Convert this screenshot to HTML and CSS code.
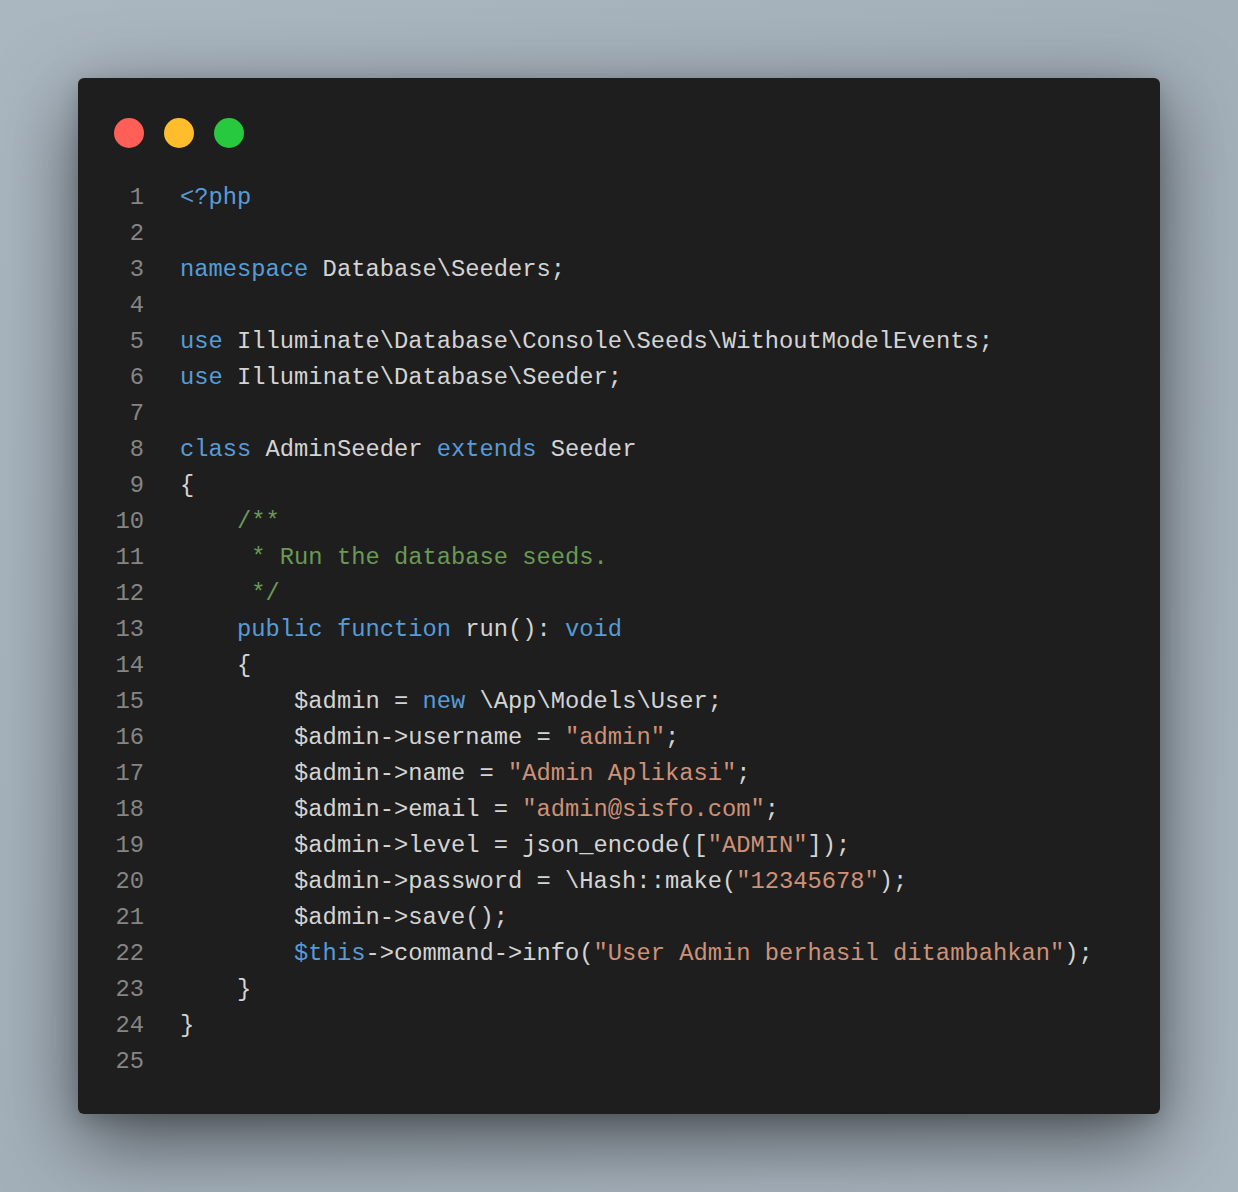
FILE: index.html
```html
<!DOCTYPE html>
<html>
<head>
<meta charset="utf-8">
<link rel="stylesheet" href="styles.css">
</head>
<body>
<div class="page">
  <div class="window">
    <div class="dots">
      <span class="dot red"></span>
      <span class="dot yellow"></span>
      <span class="dot green"></span>
    </div>
    <div class="code">
      <div class="line"><span class="num">1</span><span class="src"><span class="k">&lt;?php</span></span></div>
      <div class="line"><span class="num">2</span><span class="src"></span></div>
      <div class="line"><span class="num">3</span><span class="src"><span class="k">namespace</span> Database\Seeders;</span></div>
      <div class="line"><span class="num">4</span><span class="src"></span></div>
      <div class="line"><span class="num">5</span><span class="src"><span class="k">use</span> Illuminate\Database\Console\Seeds\WithoutModelEvents;</span></div>
      <div class="line"><span class="num">6</span><span class="src"><span class="k">use</span> Illuminate\Database\Seeder;</span></div>
      <div class="line"><span class="num">7</span><span class="src"></span></div>
      <div class="line"><span class="num">8</span><span class="src"><span class="k">class</span> AdminSeeder <span class="k">extends</span> Seeder</span></div>
      <div class="line"><span class="num">9</span><span class="src">{</span></div>
      <div class="line"><span class="num">10</span><span class="src">    <span class="c">/**</span></span></div>
      <div class="line"><span class="num">11</span><span class="src">     <span class="c">* Run the database seeds.</span></span></div>
      <div class="line"><span class="num">12</span><span class="src">     <span class="c">*/</span></span></div>
      <div class="line"><span class="num">13</span><span class="src">    <span class="k">public</span> <span class="k">function</span> run(): <span class="k">void</span></span></div>
      <div class="line"><span class="num">14</span><span class="src">    {</span></div>
      <div class="line"><span class="num">15</span><span class="src">        $admin = <span class="k">new</span> \App\Models\User;</span></div>
      <div class="line"><span class="num">16</span><span class="src">        $admin-&gt;username = <span class="s">"admin"</span>;</span></div>
      <div class="line"><span class="num">17</span><span class="src">        $admin-&gt;name = <span class="s">"Admin Aplikasi"</span>;</span></div>
      <div class="line"><span class="num">18</span><span class="src">        $admin-&gt;email = <span class="s">"admin@sisfo.com"</span>;</span></div>
      <div class="line"><span class="num">19</span><span class="src">        $admin-&gt;level = json_encode([<span class="s">"ADMIN"</span>]);</span></div>
      <div class="line"><span class="num">20</span><span class="src">        $admin-&gt;password = \Hash::make(<span class="s">"12345678"</span>);</span></div>
      <div class="line"><span class="num">21</span><span class="src">        $admin-&gt;save();</span></div>
      <div class="line"><span class="num">22</span><span class="src">        <span class="k">$this</span>-&gt;command-&gt;info(<span class="s">"User Admin berhasil ditambahkan"</span>);</span></div>
      <div class="line"><span class="num">23</span><span class="src">    }</span></div>
      <div class="line"><span class="num">24</span><span class="src">}</span></div>
      <div class="line"><span class="num">25</span><span class="src"></span></div>
    </div>
  </div>
</div>
</body>
</html>
```

FILE: styles.css
```css
html, body {
  margin: 0;
  padding: 0;
}

body {
  background: linear-gradient(135deg, #aab6c0 0%, #a3afb9 50%, #a9b5bf 100%);
  min-height: 1192px;
  font-family: "Liberation Mono", "DejaVu Sans Mono", monospace;
}

.page {
  padding: 78px;
}

.window {
  background: #1e1e1e;
  border-radius: 6px;
  padding: 40px 36px 34px 36px;
  box-shadow: 0 26px 80px rgba(0, 0, 0, 0.55), 0 6px 20px rgba(0, 0, 0, 0.15);
}

.dots {
  display: flex;
  gap: 20px;
  height: 30px;
  margin-bottom: 32px;
}

.dot {
  width: 30px;
  height: 30px;
  border-radius: 50%;
}

.red { background: #ff5f56; }
.yellow { background: #ffbd2e; }
.green { background: #27c93f; }

.code {
  display: flex;
  flex-direction: column;
  font-size: 23.77px;
  line-height: 36px;
  color: #d4d4d4;
}

.line {
  display: flex;
  height: 36px;
}

.num {
  width: 30px;
  text-align: right;
  color: #858585;
  margin-right: 36px;
  flex: none;
}

.src {
  white-space: pre;
}

.k { color: #569cd6; }
.c { color: #6a9955; }
.s { color: #ce9178; }
```
